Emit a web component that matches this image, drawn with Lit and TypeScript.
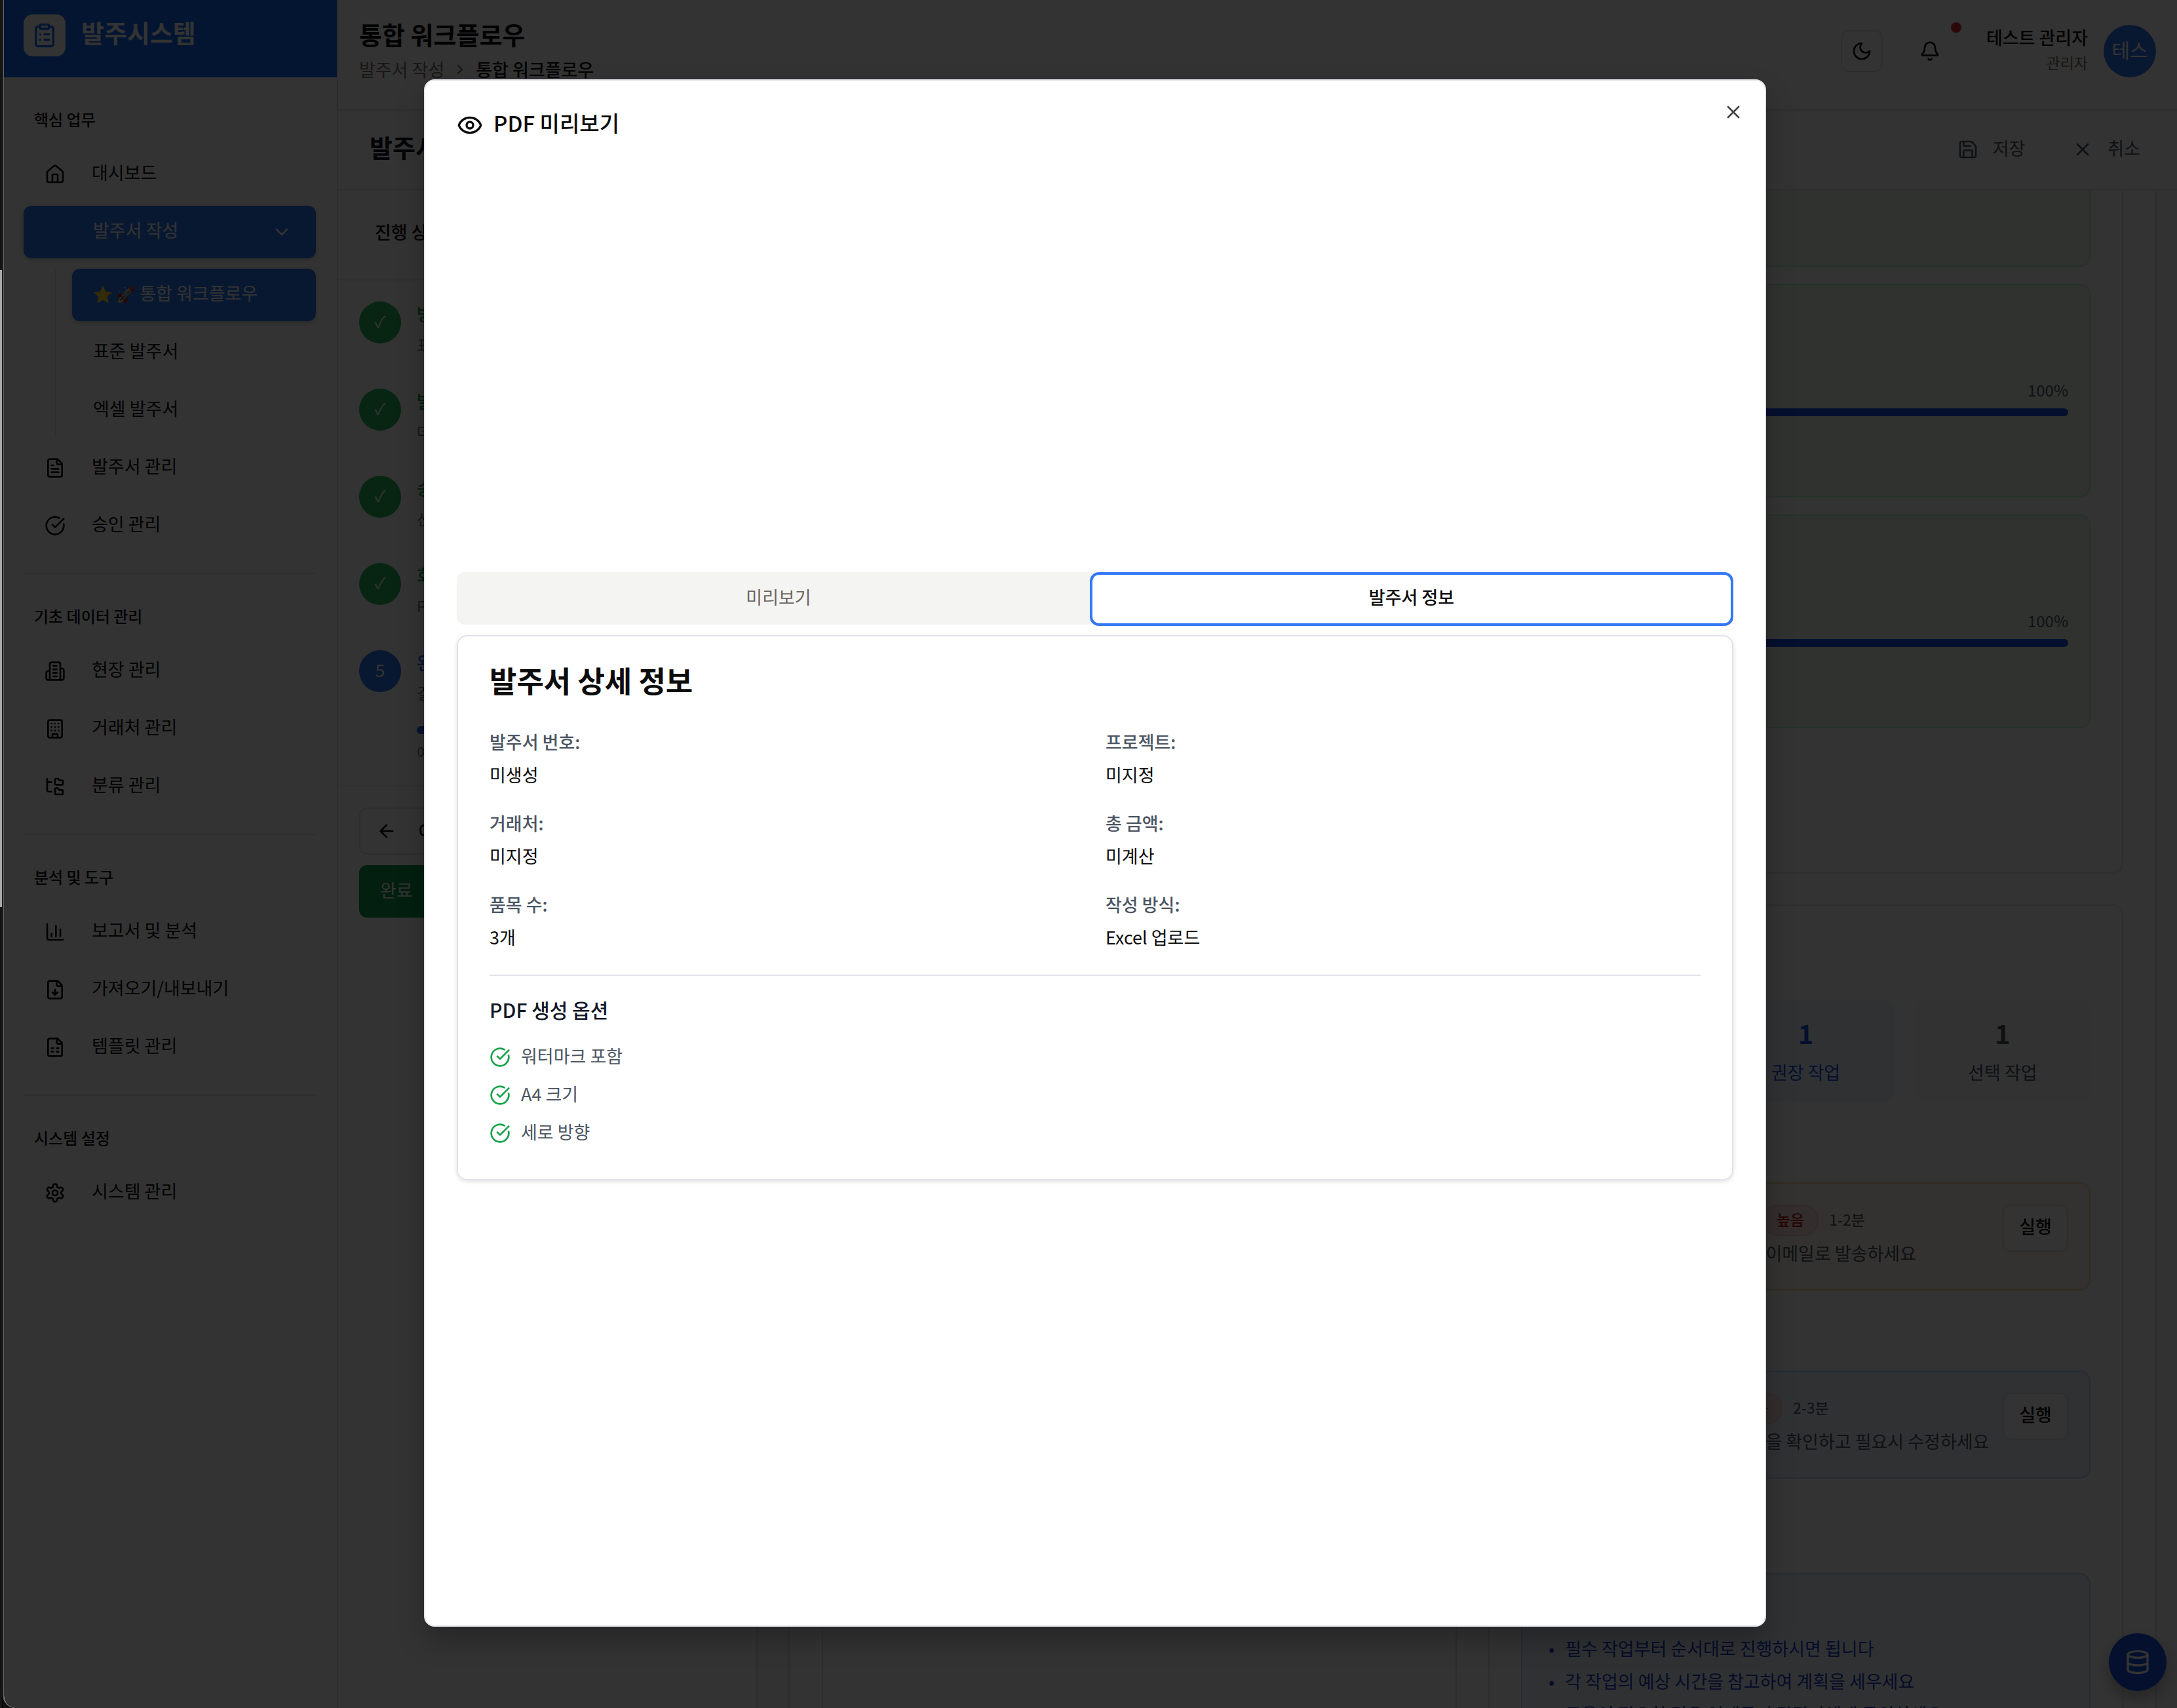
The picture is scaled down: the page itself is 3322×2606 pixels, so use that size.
import { LitElement, html, css, svg, nothing } from "lit";
import { customElement, state } from "lit/decorators.js";
import { classMap } from "lit/directives/class-map.js";

const ICONS: Record<string, unknown> = {
  clipboard: svg`<rect width="8" height="4" x="8" y="2" rx="1"/><path d="M16 4h2a2 2 0 0 1 2 2v14a2 2 0 0 1-2 2H6a2 2 0 0 1-2-2V6a2 2 0 0 1 2-2h2"/><path d="M12 11h4M12 16h4M8 11h.01M8 16h.01"/>`,
  home: svg`<path d="M15 21v-8a1 1 0 0 0-1-1h-4a1 1 0 0 0-1 1v8"/><path d="M3 10a2 2 0 0 1 .709-1.528l7-5.999a2 2 0 0 1 2.582 0l7 5.999A2 2 0 0 1 21 10v9a2 2 0 0 1-2 2H5a2 2 0 0 1-2-2z"/>`,
  fileText: svg`<path d="M15 2H6a2 2 0 0 0-2 2v16a2 2 0 0 0 2 2h12a2 2 0 0 0 2-2V7Z"/><path d="M14 2v4a2 2 0 0 0 2 2h4M10 9H8M16 13H8M16 17H8"/>`,
  check: svg`<path d="M21.801 10A10 10 0 1 1 17 3.335"/><path d="m9 11 3 3L22 4"/>`,
  site: svg`<path d="M6 22V4a2 2 0 0 1 2-2h8a2 2 0 0 1 2 2v18Z"/><path d="M6 12H4a2 2 0 0 0-2 2v6a2 2 0 0 0 2 2h2M18 9h2a2 2 0 0 1 2 2v9a2 2 0 0 1-2 2h-2M10 6h4M10 10h4M10 14h4M10 18h4"/>`,
  building: svg`<rect width="16" height="20" x="4" y="2" rx="2"/><path d="M9 22v-4h6v4M8 6h.01M16 6h.01M12 6h.01M12 10h.01M12 14h.01M16 10h.01M16 14h.01M8 10h.01M8 14h.01"/>`,
  tree: svg`<path d="M20 10a1 1 0 0 0 1-1V6a1 1 0 0 0-1-1h-2.5a1 1 0 0 1-.8-.4l-.9-1.2A1 1 0 0 0 15 3h-2a1 1 0 0 0-1 1v5a1 1 0 0 0 1 1Z"/><path d="M20 21a1 1 0 0 0 1-1v-3a1 1 0 0 0-1-1h-2.9a1 1 0 0 1-.88-.55l-.42-.85a1 1 0 0 0-.92-.6H13a1 1 0 0 0-1 1v5a1 1 0 0 0 1 1Z"/><path d="M3 5a2 2 0 0 0 2 2h3M3 3v13a2 2 0 0 0 2 2h3"/>`,
  chart: svg`<path d="M3 3v16a2 2 0 0 0 2 2h16M13 17V5M18 17V9M8 17v-3"/>`,
  fileDown: svg`<path d="M15 2H6a2 2 0 0 0-2 2v16a2 2 0 0 0 2 2h12a2 2 0 0 0 2-2V7Z"/><path d="M14 2v4a2 2 0 0 0 2 2h4M12 18v-6M9 15l3 3 3-3"/>`,
  sheet: svg`<path d="M15 2H6a2 2 0 0 0-2 2v16a2 2 0 0 0 2 2h12a2 2 0 0 0 2-2V7Z"/><path d="M14 2v4a2 2 0 0 0 2 2h4M8 13h2M14 13h2M8 17h2M14 17h2"/>`,
  settings: svg`<path d="M12.22 2h-.44a2 2 0 0 0-2 2v.18a2 2 0 0 1-1 1.73l-.43.25a2 2 0 0 1-2 0l-.15-.08a2 2 0 0 0-2.73.73l-.22.38a2 2 0 0 0 .73 2.73l.15.1a2 2 0 0 1 1 1.72v.51a2 2 0 0 1-1 1.74l-.15.09a2 2 0 0 0-.73 2.73l.22.38a2 2 0 0 0 2.73.73l.15-.08a2 2 0 0 1 2 0l.43.25a2 2 0 0 1 1 1.73V20a2 2 0 0 0 2 2h.44a2 2 0 0 0 2-2v-.18a2 2 0 0 1 1-1.73l.43-.25a2 2 0 0 1 2 0l.15.08a2 2 0 0 0 2.73-.73l.22-.39a2 2 0 0 0-.73-2.73l-.15-.08a2 2 0 0 1-1-1.74v-.5a2 2 0 0 1 1-1.74l.15-.09a2 2 0 0 0 .73-2.73l-.22-.38a2 2 0 0 0-2.73-.73l-.15.08a2 2 0 0 1-2 0l-.43-.25a2 2 0 0 1-1-1.73V4a2 2 0 0 0-2-2z"/><circle cx="12" cy="12" r="3"/>`,
  chevronDown: svg`<path d="m6 9 6 6 6-6"/>`,
  chevronRight: svg`<path d="m9 18 6-6-6-6"/>`,
  moon: svg`<path d="M12 3a6 6 0 0 0 9 9 9 9 0 1 1-9-9Z"/>`,
  bell: svg`<path d="M10.268 21a2 2 0 0 0 3.464 0"/><path d="M3.262 15.326A1 1 0 0 0 4 17h16a1 1 0 0 0 .74-1.673C19.41 13.956 18 12.499 18 8A6 6 0 0 0 6 8c0 4.499-1.411 5.956-2.738 7.326"/>`,
  save: svg`<path d="M15.2 3a2 2 0 0 1 1.4.6l3.8 3.8a2 2 0 0 1 .6 1.4V19a2 2 0 0 1-2 2H5a2 2 0 0 1-2-2V5a2 2 0 0 1 2-2z"/><path d="M17 21v-7a1 1 0 0 0-1-1H8a1 1 0 0 0-1 1v7M7 3v4a1 1 0 0 0 1 1h7"/>`,
  x: svg`<path d="M18 6 6 18M6 6l12 12"/>`,
  arrowLeft: svg`<path d="m12 19-7-7 7-7M19 12H5"/>`,
  eye: svg`<path d="M2.062 12.348a1 1 0 0 1 0-.696 10.75 10.75 0 0 1 19.876 0 1 1 0 0 1 0 .696 10.75 10.75 0 0 1-19.876 0"/><circle cx="12" cy="12" r="3"/>`,
  database: svg`<ellipse cx="12" cy="5" rx="9" ry="3"/><path d="M3 5v14a9 3 0 0 0 18 0V5M3 12a9 3 0 0 0 18 0"/>`,
  mail: svg`<rect width="20" height="16" x="2" y="4" rx="2"/><path d="m22 7-10 6L2 7"/>`,
};

const icon = (name: string, size = "") =>
  html`<svg class="icon ${size}" viewBox="0 0 24 24" aria-hidden="true">${ICONS[name]}</svg>`;

interface SubItem { label: string; emoji?: string; active?: boolean }
interface NavItem { label: string; icon: string; children?: SubItem[] }

const NAV: { title: string; items: NavItem[] }[] = [
  {
    title: "핵심 업무",
    items: [
      { label: "대시보드", icon: "home" },
      {
        label: "발주서 작성", icon: "",
        children: [{ label: "통합 워크플로우", emoji: "⭐ 🚀", active: true }, { label: "표준 발주서" }, { label: "엑셀 발주서" }],
      },
      { label: "발주서 관리", icon: "fileText" },
      { label: "승인 관리", icon: "check" },
    ],
  },
  {
    title: "기초 데이터 관리",
    items: [
      { label: "현장 관리", icon: "site" },
      { label: "거래처 관리", icon: "building" },
      { label: "분류 관리", icon: "tree" },
    ],
  },
  {
    title: "분석 및 도구",
    items: [
      { label: "보고서 및 분석", icon: "chart" },
      { label: "가져오기/내보내기", icon: "fileDown" },
      { label: "템플릿 관리", icon: "sheet" },
    ],
  },
  { title: "시스템 설정", items: [{ label: "시스템 관리", icon: "settings" }] },
];

const STEPS = [
  { title: "방식 선택", note: "표준 또는 엑셀", done: true },
  { title: "발주서 작성", note: "데이터 입력", done: true },
  { title: "승인 처리", note: "선택 사항", done: true },
  { title: "회신 확인", note: "PDF 생성", done: true },
  { title: "완료", note: "결과 확인", done: false },
];

const DETAILS = [
  ["발주서 번호:", "미생성"],
  ["프로젝트:", "미지정"],
  ["거래처:", "미지정"],
  ["총 금액:", "미계산"],
  ["품목 수:", "3개"],
  ["작성 방식:", "Excel 업로드"],
];

const base = css`
  * { box-sizing: border-box; margin: 0; padding: 0; }
  button { font: inherit; color: inherit; background: none; border: 0; cursor: pointer; }
  a { color: inherit; text-decoration: none; }
  ul, ol { list-style: none; }
  .icon { width: 32px; height: 32px; flex: none; fill: none; stroke: currentColor; stroke-width: 2; stroke-linecap: round; stroke-linejoin: round; }
  .icon.lg { width: 40px; height: 40px; }
  .icon.sm { width: 24px; height: 24px; }
`;

@customElement("app-sidebar")
class AppSidebar extends LitElement {
  static styles = [base, css`
    :host { display: block; background: #fff; border-right: 2px solid #e4e4e8; }
    .brand { display: flex; align-items: flex-start; gap: 24px; height: 118px; padding: 22px 30px; background: #146bf5; color: #fff; }
    .logo { display: grid; place-items: center; width: 64px; height: 64px; border-radius: 14px; background: #fff; color: #146bf5; }
    .name { font-size: 38px; line-height: 54px; font-weight: 700; }
    .group { margin: 0 32px 0 30px; padding: 48px 0 32px; border-bottom: 2px solid #e4e4e8; }
    .group:last-child { border-bottom: 0; }
    .title { padding: 0 16px 28px; font-size: 24px; line-height: 32px; font-weight: 500; }
    .list { display: flex; flex-direction: column; gap: 8px; }
    .item { display: flex; align-items: center; gap: 40px; width: 100%; height: 80px; padding: 0 36px 0 32px; border-radius: 12px; text-align: left; }
    .label { flex: 1; padding-bottom: 6px; white-space: nowrap; }
    .emoji { font-size: 24px; }
    .active { background: #2f78f2; color: #fff; box-shadow: 0 2px 6px rgba(0, 0, 0, 0.25); }
    .parent { padding-left: 106px; }
    .sub { display: flex; flex-direction: column; gap: 8px; margin: 16px 0 0 48px; padding-left: 24px; border-left: 2px solid #e4e4e8; }
  `];

  private subItem(c: SubItem) {
    return html`<li><a href="#" class=${classMap({ item: true, active: !!c.active })}>
      <span class="label">${c.emoji ? html`<span class="emoji">${c.emoji}</span> ` : nothing}${c.label}</span></a></li>`;
  }

  render() {
    return html`
      <div class="brand"><span class="logo">${icon("clipboard", "lg")}</span><span class="name">발주시스템</span></div>
      <nav>
        ${NAV.map((g) => html`
          <section class="group">
            <h3 class="title">${g.title}</h3>
            <ul class="list">
              ${g.items.map((i) => html`<li>
                ${i.children
                  ? html`<button class="item active parent" aria-expanded="true"><span class="label">${i.label}</span>${icon("chevronDown")}</button>
                    <ul class="sub">${i.children.map((c) => this.subItem(c))}</ul>`
                  : html`<a href="#" class="item">${icon(i.icon)}<span class="label">${i.label}</span></a>`}
              </li>`)}
            </ul>
          </section>`)}
      </nav>`;
  }
}

@customElement("app-topbar")
class AppTopbar extends LitElement {
  static styles = [base, css`
    :host { display: block; background: #fff; }
    .header { display: flex; justify-content: space-between; height: 168px; padding: 0 32px; border-bottom: 2px solid #e4e4e8; box-shadow: 0 2px 6px rgba(0, 0, 0, 0.1); }
    .titles { padding-top: 24px; }
    .h1 { margin-bottom: 4px; font-size: 38px; line-height: 56px; font-weight: 700; }
    .crumbs { display: flex; align-items: center; gap: 12px; line-height: 44px; color: #78716c; }
    .here { color: #111; font-weight: 500; }
    .tools { display: flex; align-items: flex-start; padding-top: 38px; }
    .square { position: relative; display: grid; place-items: center; width: 64px; height: 64px; margin-top: 8px; }
    .theme { border: 2px solid #e4e4e8; border-radius: 12px; margin-right: 40px; }
    .dot { position: absolute; top: -12px; right: -16px; width: 16px; height: 16px; border-radius: 50%; background: #dc3030; }
    .who { margin: 0 24px 0 54px; text-align: right; line-height: 38px; font-weight: 500; }
    .role { font-size: 23px; font-weight: 400; color: #78716c; }
    .avatar { display: grid; place-items: center; width: 80px; height: 80px; padding-bottom: 6px; border-radius: 50%; background: #2f78f2; color: #fff; font-size: 30px; }
    .bar { display: flex; justify-content: space-between; align-items: center; height: 122px; padding: 0 56px 0 48px; border-bottom: 2px solid #e4e4e8; }
    .h2 { padding-bottom: 8px; font-size: 38px; line-height: 56px; font-weight: 700; color: #111827; }
    .acts { display: flex; gap: 72px; color: #4b5563; }
    .act { display: flex; align-items: center; gap: 22px; line-height: 44px; }
    .word { padding-bottom: 4px; }
  `];

  render() {
    return html`
      <header class="header">
        <div class="titles">
          <h1 class="h1">통합 워크플로우</h1>
          <div class="crumbs"><a href="#">발주서 작성</a>${icon("chevronRight", "sm")}<span class="here">통합 워크플로우</span></div>
        </div>
        <div class="tools">
          <button class="square theme" aria-label="테마 전환">${icon("moon")}</button>
          <button class="square" aria-label="알림">${icon("bell")}<span class="dot"></span></button>
          <div class="who">테스트 관리자<div class="role">관리자</div></div>
          <span class="avatar">테스</span>
        </div>
      </header>
      <div class="bar">
        <h2 class="h2">발주서 작성</h2>
        <div class="acts">
          <button class="act">${icon("save")}<span class="word">저장</span></button>
          <button class="act">${icon("x")}<span class="word">취소</span></button>
        </div>
      </div>`;
  }
}

@customElement("step-panel")
class StepPanel extends LitElement {
  static styles = [base, css`
    :host { display: block; background: #fff; border-right: 2px solid #e4e4e8; }
    .head { padding: 38px 56px 46px; border-bottom: 2px solid #eeeef0; line-height: 52px; font-weight: 500; }
    .steps { padding: 32px 32px 0; }
    .step { display: flex; gap: 24px; height: 133px; }
    .step:last-child { height: 206px; }
    .mark { flex: none; display: grid; place-items: center; width: 64px; height: 64px; padding-bottom: 4px; border-radius: 50%; background: #2f78f2; color: #fff; }
    .done .mark { background: #28b95f; font-size: 24px; }
    .info { flex: 1; line-height: 38px; color: #2563eb; font-weight: 500; }
    .done .info { color: #16a34a; }
    .note { padding-top: 8px; font-size: 23px; color: #6b7280; font-weight: 400; }
    .track { height: 12px; margin-top: 32px; border-radius: 6px; background: #2563eb; }
    .foot { display: flex; flex-direction: column; gap: 16px; padding: 32px; border-top: 2px solid #eeeef0; }
    .prev { display: flex; align-items: center; gap: 32px; height: 72px; padding: 0 24px; border: 2px solid #e4e4e8; border-radius: 12px; font-weight: 500; }
    .finish { height: 80px; padding: 0 32px 4px; border-radius: 12px; background: #0b9b4a; color: #fff; text-align: left; }
  `];

  render() {
    return html`
      <div class="head">진행 상황</div>
      <ol class="steps">
        ${STEPS.map((s, i) => html`<li class=${classMap({ step: true, done: s.done })}>
          <span class="mark">${s.done ? "✓" : i + 1}</span>
          <div class="info">${s.title}<div class="note">${s.note}</div>
            ${s.done ? nothing : html`<div class="track"></div><div class="note">예상</div>`}
          </div>
        </li>`)}
      </ol>
      <div class="foot">
        <button class="prev">${icon("arrowLeft")}이전</button>
        <button class="finish">완료</button>
      </div>`;
  }
}

@customElement("work-area")
class WorkArea extends LitElement {
  static styles = [base, css`
    :host { display: block; background: #fafafa; }
    .outer { display: grid; grid-template-columns: 1fr 1fr; gap: 48px; height: 100%; padding: 0 48px; background: #fff; border: solid #e4e4e8; border-width: 0 2px; box-shadow: 0 2px 6px rgba(0, 0, 0, 0.1); }
    .col { min-width: 0; }
    .pane { border: solid #e4e4e8; border-width: 0 2px; }
    .card { padding: 48px; border: 2px solid #e4e4e8; border-radius: 16px; box-shadow: 0 2px 4px rgba(0, 0, 0, 0.06); }
    .first { height: 1042px; margin-bottom: 48px; padding-top: 0; border-top: 0; border-radius: 0 0 16px 16px; }
    .box { height: 326px; margin-bottom: 26px; padding: 32px; border: 2px solid #bbf7d0; border-radius: 16px; background: #f0fbee; line-height: 48px; }
    .tail { height: 117px; border-top: 0; border-radius: 0 0 16px 16px; }
    .pct { margin: 16px 0 12px; font-size: 24px; line-height: 32px; text-align: right; color: #4b5563; }
    .track { height: 12px; border-radius: 6px; background: #1450e6; }
    .h { font-size: 30px; line-height: 48px; font-weight: 500; }
    .stats { display: grid; grid-template-columns: repeat(3, 1fr); gap: 32px; margin-top: 48px; text-align: center; }
    .stat { padding: 22px 0; border-radius: 16px; background: #f7f7f8; color: #4b5563; line-height: 48px; }
    .num { margin-bottom: 8px; font-size: 40px; line-height: 56px; font-weight: 700; }
    .blue { background: #eff6ff; color: #1450e6; }
    .red { background: #fef2f2; color: #b91c1c; }
    .sub { margin: 48px 0 24px; line-height: 50px; font-weight: 500; }
    .job { display: flex; gap: 16px; height: 165px; padding: 32px; border: 2px solid #fed7aa; border-radius: 16px; background: #fff7ed; }
    .review { background: #eff6ff; border-color: #bfdbfe; }
    .text { flex: 1; min-width: 0; color: #4b5563; white-space: nowrap; line-height: 52px; }
    .row { display: flex; align-items: center; gap: 16px; font-size: 23px; line-height: 40px; height: 48px; }
    .name { padding-right: 8px; font-size: 30px; font-weight: 500; color: #111; }
    .badge { padding: 0 20px 4px; border: 2px solid #fecaca; border-radius: 24px; background: #fee2e2; color: #b91c1c; font-weight: 500; }
    .time { padding-bottom: 4px; }
    .run { width: 100px; height: 72px; padding-bottom: 6px; border: 2px solid #e4e4e8; border-radius: 12px; background: #fff; color: #111; font-weight: 500; }
    .tips { margin-top: 144px; padding: 32px; border: 2px solid #bfdbfe; border-radius: 16px; background: #eff6ff; color: #1d3fc4; line-height: 50px; }
    .tips .h { margin-bottom: 8px; }
    .tip { display: flex; gap: 16px; padding-left: 8px; }
  `];

  private progress(title: string) {
    return html`<div class="box"><h4 class="h">${title}</h4><p>처리가 완료되었습니다</p><div class="pct">100%</div><div class="track"></div></div>`;
  }

  private job(kind: string, name: string, time: string, text: string) {
    return html`<div class="job ${kind}">${icon("mail")}
      <div class="text"><div class="row"><span class="name">${name}</span><span class="badge">높음</span><span class="time">${time}</span></div><p>${text}</p></div>
      <button class="run">실행</button></div>`;
  }

  render() {
    return html`<div class="outer">
      <div class="col pane"></div>
      <div class="col">
        <section class="card first"><div class="box tail"></div>${this.progress("PDF 생성")}${this.progress("이메일 발송")}</section>
        <section class="card">
          <h3 class="h">다음 작업</h3>
          <div class="stats">
            <div class="stat red"><div class="num">1</div>필수 작업</div>
            <div class="stat blue"><div class="num">1</div>권장 작업</div>
            <div class="stat"><div class="num">1</div>선택 작업</div>
          </div>
          <h4 class="sub">필수 작업</h4>
          ${this.job("", "거래처에 이메일 발송", "1-2분", "생성된 발주서를 거래처에 이메일로 발송하세요")}
          <h4 class="sub">권장 작업</h4>
          ${this.job("review", "발주서 내용 확인", "2-3분", "자동 생성된 발주서의 내용을 확인하고 필요시 수정하세요")}
          <div class="tips">
            <h4 class="h">안내</h4>
            <ul>
              ${["필수 작업부터 순서대로 진행하시면 됩니다", "각 작업의 예상 시간을 참고하여 계획을 세우세요", "도움이 필요한 경우 언제든지 담당자에게 문의하세요"].map(
                (t) => html`<li class="tip"><span>•</span>${t}</li>`)}
            </ul>
          </div>
        </section>
      </div>
    </div>`;
  }
}

@customElement("preview-dialog")
class PreviewDialog extends LitElement {
  @state() private tab = 1;

  static styles = [base, css`
    :host { position: relative; display: block; background: #fff; border: 2px solid #e2e3ea; border-radius: 16px; box-shadow: 0 20px 40px rgba(0, 0, 0, 0.25); color: #0c0c0d; }
    .head { display: flex; align-items: center; gap: 16px; height: 136px; }
    .title { padding-bottom: 8px; font-size: 33px; line-height: 48px; font-weight: 500; }
    .close { position: absolute; top: 32px; right: 32px; width: 32px; height: 32px; color: #444; }
    .tabs { display: grid; grid-template-columns: 1fr 1fr; height: 80px; margin-top: 614px; padding: 8px; border-radius: 12px; background: #f4f4f2; }
    .tab { height: 66px; padding-bottom: 6px; border-radius: 6px; color: #6b6560; }
    .on { background: #fff; color: #0c0c0d; font-weight: 500; box-shadow: 0 0 0 4px #fff, 0 0 0 8px #3478f6; }
    .card { margin-top: 16px; padding: 48px; border: 2px solid #e2e3ea; border-radius: 16px; box-shadow: 0 2px 6px rgba(0, 0, 0, 0.12); }
    .h { margin-bottom: 50px; font-size: 45px; line-height: 38px; font-weight: 700; }
    .grid { display: grid; grid-template-columns: 1fr 1fr; gap: 24px 32px; padding-bottom: 32px; line-height: 50px; }
    .key { color: #4b5563; font-weight: 500; }
    .opt { padding: 26px 0; border-top: 2px solid #e2e3ea; font-size: 30px; line-height: 50px; font-weight: 500; color: #111827; }
    .list { display: flex; flex-direction: column; gap: 14px; color: #4b5563; }
    .li { display: flex; align-items: center; gap: 16px; line-height: 40px; height: 44px; }
    .li .icon { color: #16a34a; }
    .word { padding-bottom: 4px; }
  `];

  render() {
    return html`
      <div class="head">${icon("eye", "lg")}<h2 class="title">PDF 미리보기</h2></div>
      <button class="close" aria-label="닫기">${icon("x")}</button>
      <div class="tabs" role="tablist">
        ${["미리보기", "발주서 정보"].map((t, i) => html`<button role="tab" aria-selected=${this.tab === i} class=${classMap({ tab: true, on: this.tab === i })} @click=${() => (this.tab = i)}>${t}</button>`)}
      </div>
      <section class="card">
        <h3 class="h">발주서 상세 정보</h3>
        <dl class="grid">${DETAILS.map(([k, v]) => html`<div><dt class="key">${k}</dt><dd>${v}</dd></div>`)}</dl>
        <h4 class="opt">PDF 생성 옵션</h4>
        <ul class="list">${["워터마크 포함", "A4 크기", "세로 방향"].map((t) => html`<li class="li">${icon("check")}<span class="word">${t}</span></li>`)}</ul>
      </section>`;
  }
}

@customElement("app-root")
class AppRoot extends LitElement {
  static styles = [base, css`
    :host { display: flex; height: 100vh; overflow: hidden; background: #111; color: #0c0c0d; font-family: "Noto Sans CJK KR", "Noto Color Emoji", sans-serif; font-size: 27px; line-height: 40px; }
    .edge { flex: none; width: 4px; border-right: 1px solid #000; background: linear-gradient(#141414 0 412px, #a9a9a9 412px 1384px, #141414 1384px); }
    .window { position: relative; flex: 1; display: flex; min-width: 0; overflow: hidden; border-left: 2px solid #5c5c5c; border-bottom-left-radius: 20px; background: #fff; }
    .side { flex: none; width: 510px; }
    .main { flex: 1; display: flex; flex-direction: column; min-width: 0; }
    .body { flex: 1; display: flex; min-height: 0; overflow: hidden; }
    .steps { flex: none; width: 640px; }
    .work { flex: 1; min-width: 0; padding: 0 32px 0 48px; }
    .fab { position: absolute; right: 16px; bottom: 26px; display: grid; place-items: center; width: 88px; height: 88px; border-radius: 50%; background: #1450e6; color: #fff; box-shadow: 0 10px 24px rgba(0, 0, 0, 0.3); }
    .overlay { position: absolute; inset: 0; display: grid; grid-template-columns: minmax(0, 2048px); justify-content: center; padding: 121px 0 124px 14px; background: rgba(0, 0, 0, 0.8); }
    .dialog { padding: 0 48px; }
  `];

  render() {
    return html`
      <div class="edge"></div>
      <div class="window">
        <app-sidebar class="side"></app-sidebar>
        <main class="main">
          <app-topbar></app-topbar>
          <div class="body"><step-panel class="steps"></step-panel><work-area class="work"></work-area></div>
        </main>
        <button class="fab" aria-label="데이터">${icon("database", "lg")}</button>
        <div class="overlay"><preview-dialog class="dialog" role="dialog" aria-modal="true" aria-label="PDF 미리보기"></preview-dialog></div>
      </div>`;
  }
}
